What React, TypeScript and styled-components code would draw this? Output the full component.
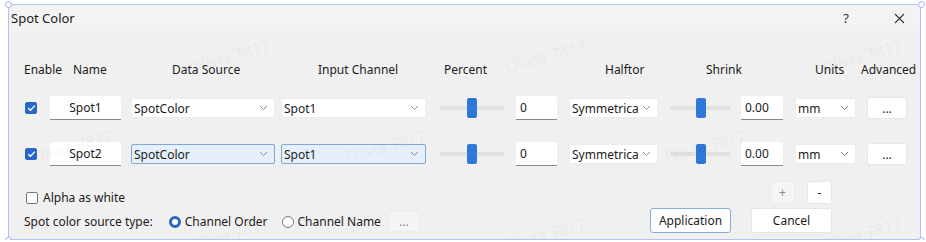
import React from "react";
import styled, { createGlobalStyle } from "styled-components";

const GlobalStyle = createGlobalStyle`
  html, body {
    margin: 0;
    padding: 0;
    background: #ffffff;
    font-family: "Noto Sans", "Open Sans", sans-serif;
    font-size: 12px;
    color: #1b1b1b;
    overflow: hidden;
  }
`;

const COLS = "26px 81px 150px 159px 76px 53px 101px 71px 54px 72px 50px";

const Frame = styled.div`
  position: relative;
  margin: 4px 0 0 8px;
  width: 913px;
  height: 236px;
  border: 1px solid #b4c1f4;
  box-sizing: border-box;
  background: #f0f0f0;
`;

const Handle = styled.div<{ $x: number; $y: number }>`
  position: absolute;
  left: ${(p) => p.$x}px;
  top: ${(p) => p.$y}px;
  width: 7px;
  height: 7px;
  border: 1px solid #9fb0ef;
  border-radius: 50%;
  background: #ffffff;
  box-sizing: border-box;
`;

const TitleBar = styled.div`
  height: 26px;
  background: #f3f3f3;
  display: flex;
  align-items: center;
  padding: 0 4px 0 2px;
  font-size: 13px;
`;

const Title = styled.div`
  flex: 1;
`;

const TitleButton = styled.div<{ $w: number; $ml?: number }>`
  width: ${(p) => p.$w}px;
  margin-left: ${(p) => p.$ml ?? 0}px;
  font-size: 13px;
  color: #333;
  display: flex;
  justify-content: center;
`;

const Body = styled.div`
  padding: 0 0 0 15px;
`;

const Grid = styled.div<{ $h: number }>`
  display: grid;
  grid-template-columns: ${COLS};
  align-items: center;
  height: ${(p) => p.$h}px;
`;

const Header = styled.div<{ $ml: number }>`
  margin-left: ${(p) => p.$ml}px;
  white-space: nowrap;
  width: 0;
`;

const Check = styled.div<{ $on?: boolean }>`
  width: 12px;
  height: 12px;
  box-sizing: border-box;
  border-radius: 2px;
  margin-left: 1px;
  background: ${(p) => (p.$on ? "#2a66c9" : "#ffffff")};
  border: 1px solid ${(p) => (p.$on ? "#2a66c9" : "#7a7a7a")};
  display: flex;
  align-items: center;
  justify-content: center;
`;

const TextBox = styled.div<{ $w: number; $center?: boolean }>`
  width: ${(p) => p.$w}px;
  height: 24px;
  box-sizing: border-box;
  background: #ffffff;
  border-bottom: 1px solid #8a8a8a;
  border-radius: 2px 2px 0 0;
  display: flex;
  align-items: center;
  justify-content: ${(p) => (p.$center ? "center" : "flex-start")};
  padding: 0 0 0 ${(p) => (p.$center ? 0 : 4)}px;
`;

const Select = styled.div<{ $w: number; $active?: boolean }>`
  width: ${(p) => p.$w}px;
  height: 20px;
  box-sizing: border-box;
  background: ${(p) => (p.$active ? "#e6f0fb" : "#ffffff")};
  border: 1px solid ${(p) => (p.$active ? "#7ea8dc" : "#ececec")};
  border-radius: 2px;
  display: flex;
  align-items: center;
  padding: 0 6px 0 2px;
  gap: 4px;
  span {
    flex: 1;
    white-space: nowrap;
    overflow: hidden;
  }
`;

const Slider = styled.div<{ $w: number }>`
  position: relative;
  width: ${(p) => p.$w}px;
  height: 20px;
  display: flex;
  align-items: center;
`;

const Track = styled.div`
  width: 100%;
  height: 4px;
  background: #e1e1e1;
  border-radius: 2px;
`;

const Thumb = styled.div<{ $x: number }>`
  position: absolute;
  left: ${(p) => p.$x}px;
  top: 0;
  width: 10px;
  height: 20px;
  border-radius: 2px;
  background: #2f78d9;
`;

const Button = styled.div<{ $w: number; $h: number; $tone?: "plain" | "faint" | "default" }>`
  width: ${(p) => p.$w}px;
  height: ${(p) => p.$h}px;
  box-sizing: border-box;
  border-radius: 3px;
  display: flex;
  align-items: center;
  justify-content: center;
  background: ${(p) => (p.$tone === "faint" ? "#f5f5f5" : "#ffffff")};
  border: 1px solid
    ${(p) => (p.$tone === "default" ? "#86aede" : p.$tone === "faint" ? "#ececec" : "#e6e6e6")};
  color: ${(p) => (p.$tone === "faint" ? "#8a8a8a" : "#1b1b1b")};
`;

const Footer = styled.div`
  display: flex;
  justify-content: space-between;
  padding: 3px 88px 0 0;
`;

const FooterLeft = styled.div`
  display: flex;
  flex-direction: column;
  padding-top: 9px;
  gap: 5px;
`;

const Line = styled.div<{ $gap: number }>`
  display: flex;
  align-items: center;
  gap: ${(p) => p.$gap}px;
  white-space: nowrap;
`;

const Radio = styled.div<{ $on?: boolean }>`
  width: 12px;
  height: 12px;
  box-sizing: border-box;
  border-radius: 50%;
  border: ${(p) => (p.$on ? "3.5px solid #2a66c9" : "1px solid #7a7a7a")};
  background: #ffffff;
`;

const RadioItem = styled(Line)<{ $ml: number }>`
  margin-left: ${(p) => p.$ml}px;
`;

const FooterRight = styled.div`
  display: flex;
  flex-direction: column;
  align-items: flex-end;
  gap: 4px;
  padding-top: 1px;
`;

const ButtonRow = styled.div<{ $gap: number }>`
  display: flex;
  gap: ${(p) => p.$gap}px;
`;

const MarkLayer = styled.div`
  position: absolute;
  inset: 0;
  overflow: hidden;
  pointer-events: none;
`;

const Watermark = styled.div<{ $x: number; $y: number }>`
  position: absolute;
  left: ${(p) => p.$x}px;
  top: ${(p) => p.$y}px;
  font-size: 16px;
  color: rgba(0, 0, 0, 0.05);
  transform: rotate(-15deg);
  white-space: nowrap;
`;

const Chevron = () => (
  <svg width="9" height="6" viewBox="0 0 9 6">
    <path d="M1 1 L4.5 4.5 L8 1" fill="none" stroke="#8a8a8a" strokeWidth="1" />
  </svg>
);

const Tick = () => (
  <svg width="9" height="8" viewBox="0 0 9 8">
    <path d="M1.2 4.2 L3.5 6.3 L7.8 1.6" fill="none" stroke="#ffffff" strokeWidth="1.4" />
  </svg>
);

const rows = [
  { name: "Spot1", active: false },
  { name: "Spot2", active: true },
];

const marks = [
  [179, 40], [495, 40], [811, 40],
  [22, 130], [335, 130], [655, 130],
  [179, 218], [495, 218], [811, 218],
];

export default function App() {
  return (
    <>
      <GlobalStyle />
      <Frame>
        <TitleBar>
          <Title>Spot Color</Title>
          <TitleButton $w={20}>?</TitleButton>
          <TitleButton $w={34} $ml={26}>
            <svg width="11" height="11" viewBox="0 0 11 11">
              <path d="M1 1 L10 10 M10 1 L1 10" stroke="#333" strokeWidth="1.1" />
            </svg>
          </TitleButton>
        </TitleBar>
        <Body>
          <Grid $h={24} style={{ marginTop: 26 }}>
            <Header $ml={0}>Enable</Header>
            <Header $ml={23}>Name</Header>
            <Header $ml={41}>Data Source</Header>
            <Header $ml={37}>Input Channel</Header>
            <Header $ml={4}>Percent</Header>
            <Header $ml={0} />
            <Header $ml={36}>Halftor</Header>
            <Header $ml={36}>Shrink</Header>
            <Header $ml={0} />
            <Header $ml={20}>Units</Header>
            <Header $ml={-6}>Advanced</Header>
          </Grid>
          {rows.map((r, i) => (
            <Grid $h={46} key={r.name} style={{ marginTop: i === 0 ? 4 : 0 }}>
              <Check $on>
                <Tick />
              </Check>
              <TextBox $w={71} $center>{r.name}</TextBox>
              <Select $w={144} $active={r.active}>
                <span>SpotColor</span>
                <Chevron />
              </Select>
              <Select $w={145} $active={r.active}>
                <span>Spot1</span>
                <Chevron />
              </Select>
              <Slider $w={65}>
                <Track />
                <Thumb $x={27} />
              </Slider>
              <TextBox $w={41}>0</TextBox>
              <Select $w={89}>
                <span>Symmetrica</span>
                <Chevron />
              </Select>
              <Slider $w={61}>
                <Track />
                <Thumb $x={26} />
              </Slider>
              <TextBox $w={42}>0.00</TextBox>
              <Select $w={61}>
                <span>mm</span>
                <Chevron />
              </Select>
              <Button $w={40} $h={22}>...</Button>
            </Grid>
          ))}
          <Footer>
            <FooterLeft>
              <Line $gap={5}>
                <Check style={{ marginLeft: 2 }} />
                Alpha as white
              </Line>
              <Line $gap={0}>
                Spot color source type:
                <RadioItem $gap={4} $ml={16}>
                  <Radio $on />
                  Channel Order
                </RadioItem>
                <RadioItem $gap={4} $ml={14}>
                  <Radio />
                  Channel Name
                </RadioItem>
                <Button $w={32} $h={21} $tone="faint" style={{ marginLeft: 7 }}>
                  ...
                </Button>
              </Line>
            </FooterLeft>
            <FooterRight>
              <ButtonRow $gap={12}>
                <Button $w={25} $h={23} $tone="faint">+</Button>
                <Button $w={25} $h={23}>-</Button>
              </ButtonRow>
              <ButtonRow $gap={20}>
                <Button $w={81} $h={25} $tone="default">Application</Button>
                <Button $w={81} $h={25}>Cancel</Button>
              </ButtonRow>
            </FooterRight>
          </Footer>
        </Body>
        <MarkLayer>
          {marks.map(([x, y], i) => (
            <Watermark key={i} $x={x} $y={y}>Olivia 7817</Watermark>
          ))}
        </MarkLayer>
        <Handle $x={-4} $y={-4} />
        <Handle $x={909} $y={-4} />
        <Handle $x={-4} $y={232} />
        <Handle $x={909} $y={232} />
      </Frame>
    </>
  );
}
